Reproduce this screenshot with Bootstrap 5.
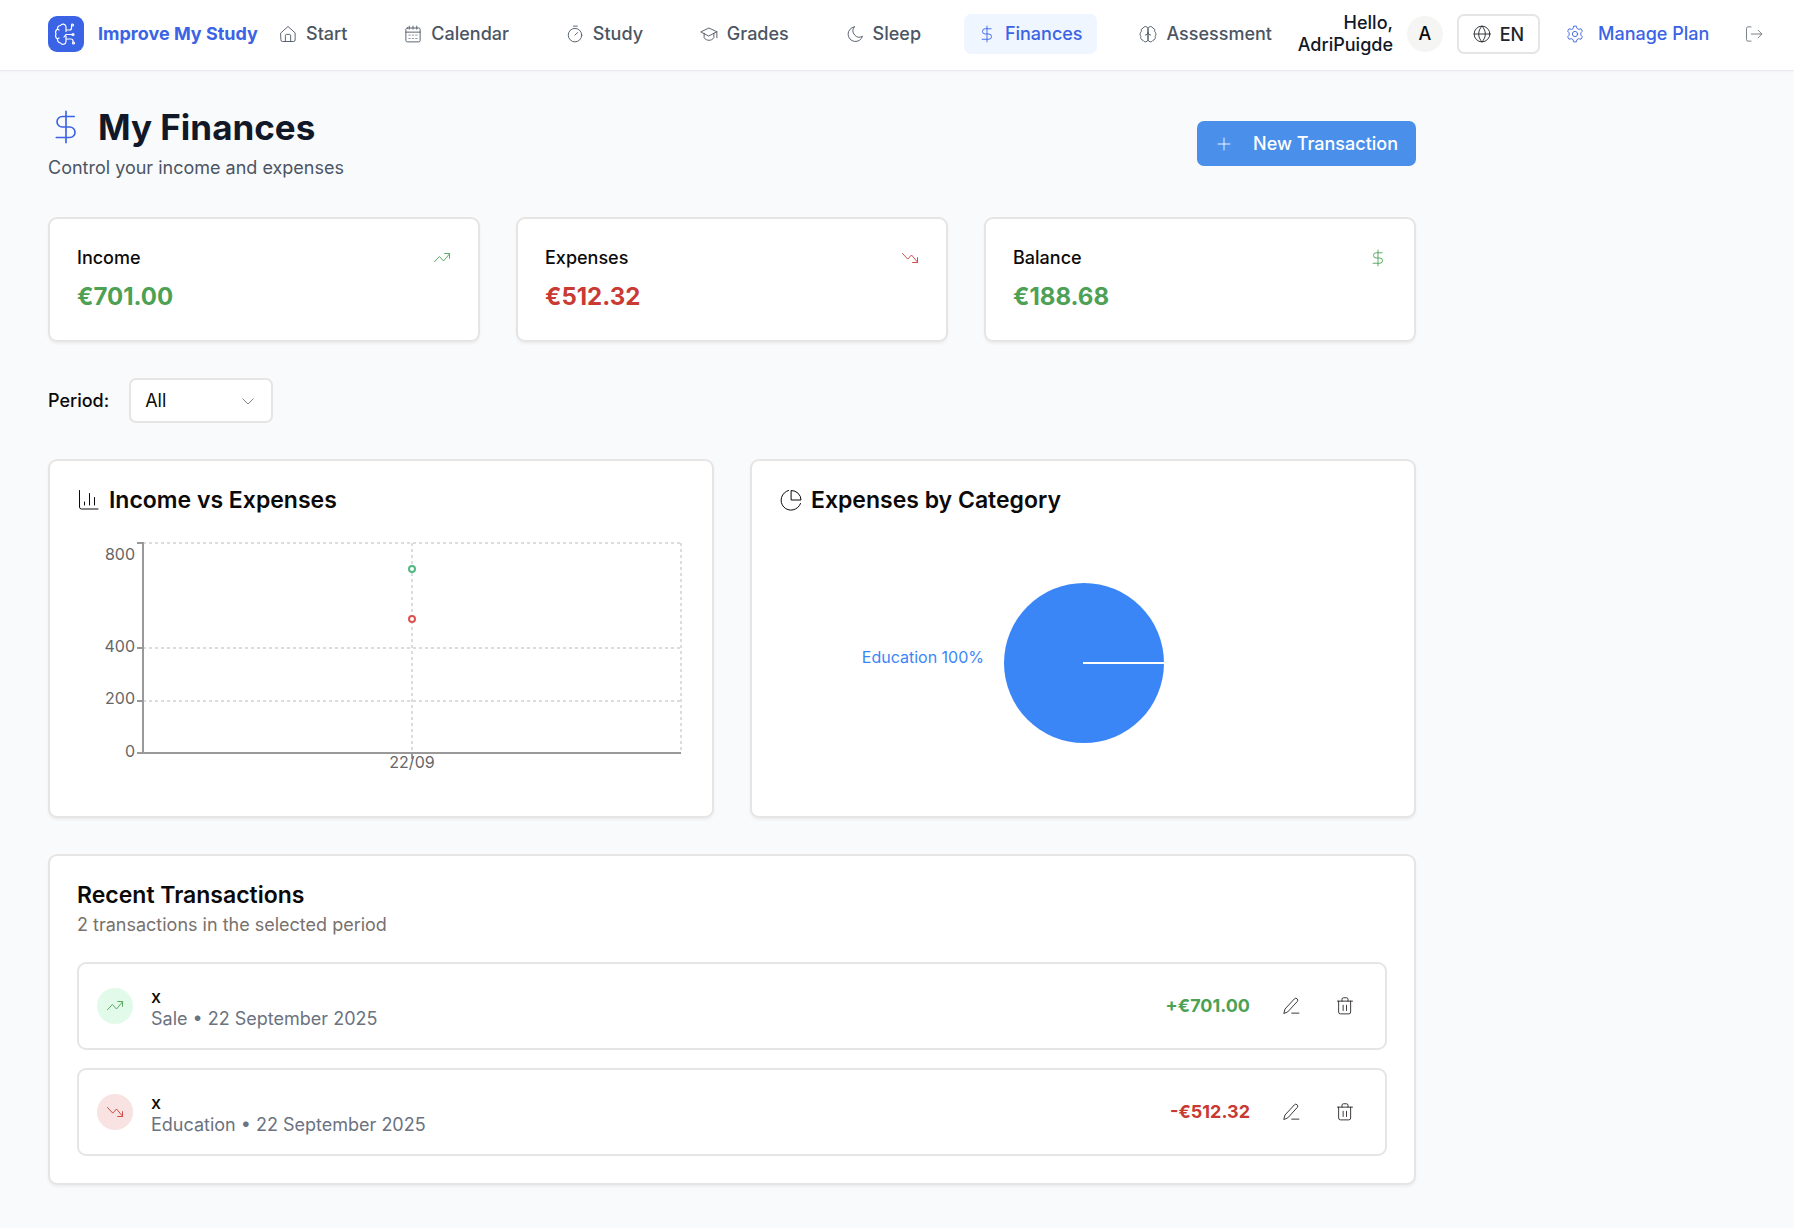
<!DOCTYPE html>
<html lang="en">
<head>
<meta charset="utf-8">
<meta name="viewport" content="width=device-width, initial-scale=1">
<title>My Finances - Improve My Study</title>
<link href="https://cdn.jsdelivr.net/npm/bootstrap@5.3.0/dist/css/bootstrap.min.css" rel="stylesheet">
<style>
:root { --brand:#3b63e5; --line:#e7e5e4; --gain:#4da155; --loss:#c93a32; --ink:#0c0a09; }
body { font-family:Inter,"Liberation Sans",sans-serif; font-size:18px; line-height:24px; color:var(--ink); background:#f9fafc; }
svg.ico { width:18px; height:18px; flex:none; fill:none; stroke:currentColor; stroke-width:1.2; stroke-linecap:round; stroke-linejoin:round; }
.topbar { height:71px; padding:0 18px 2px 48px; background:#fff; border-bottom:1px solid #e9ebee; box-shadow:0 1px 2px rgba(0,0,0,.03); }
.brand { gap:14px; width:217px; color:var(--brand); font-weight:700; white-space:nowrap; }
.brand-mark { width:36px; height:36px; border-radius:9px; background:var(--brand); color:#fff; }
.brand-mark svg.ico { width:24px; height:24px; }
.main-nav { width:1021px; }
.main-nav .nav-link { display:flex; align-items:center; gap:9px; height:40px; padding:0 14px; border-radius:7px; color:#4b5563; font-weight:500; }
.main-nav .nav-link.active { background:#eff6ff; color:var(--brand); }
.greeting { width:107px; line-height:22px; font-weight:500; color:#111827; text-align:right; }
.account { gap:14px; padding-left:14px; }
.avatar { width:36px; height:36px; background:#f5f5f4; font-weight:500; }
.lang { height:40px; width:83px; padding:0; border:2px solid var(--line); border-radius:7px; background:#fff; font-size:18px; font-weight:500; gap:9px; }
.plan { gap:14px; margin-left:12px; color:var(--brand); font-weight:500; }
.bare { width:45px; height:40px; padding:0; border:0; color:#292524; }
.page { max-width:1464px; padding:35px 48px; gap:36px; }
.page h1 { margin:0 0 6px; font-size:35px; line-height:42px; font-weight:700; color:#111827; gap:14px; }
.page h1 svg.ico { width:36px; height:36px; color:var(--brand); stroke-width:1.1; }
.subtitle { line-height:27px; color:#4b5563; }
.btn-new { height:45px; padding:0 18px; border:0; border-radius:7px; background:#4a90eb; color:#fff; font-size:18px; font-weight:500; gap:20px; }
.panel { padding:27px; border:2px solid var(--line); border-radius:9px; background:#fff; box-shadow:0 2px 3px rgba(0,0,0,.05); }
.tiles { --bs-gutter-x:36px; --bs-gutter-y:36px; }
.panel h2 { margin:0; font-size:18px; line-height:24px; font-weight:500; }
.amount { margin-top:11px; font-size:24px; line-height:32px; font-weight:700; }
.panel h3 { margin:0; font-size:23px; line-height:24px; font-weight:600; gap:8px; }
.panel h3 svg.ico { width:24px; height:24px; stroke-width:1; }
.gain { color:var(--gain); }
.loss { color:var(--loss); }
.period { gap:20px; font-weight:500; }
.period .form-select { width:144px; height:45px; padding:0 14px; border:2px solid var(--line); border-radius:7px; font-size:18px; color:var(--ink);
  background:#fff url("data:image/svg+xml,%3Csvg xmlns='http://www.w3.org/2000/svg' viewBox='0 0 24 24' fill='none' stroke='%23808080' stroke-width='1.3' stroke-linecap='round' stroke-linejoin='round'%3E%3Cpath d='m5 9 7 7 7-7'/%3E%3C/svg%3E") no-repeat right 14px center/18px 18px; }
.plot { display:block; width:100%; height:255px; margin-top:22px; font-size:16px; overflow:visible; }
.plot text { fill:#666; }
.grid-line { stroke:#dcdcdc; stroke-width:2; stroke-dasharray:3 3; }
.axis-line { stroke:#999; stroke-width:2; }
.hint { margin:4px 0 24px; line-height:27px; color:#78716c; }
.entry { padding:18px; border:2px solid #e5e5e5; border-radius:9px; }
.entry + .entry { margin-top:18px; }
.entry-text { line-height:22px; padding-top:4px; }
.dot { width:36px; height:36px; margin-right:18px; }
.dot-in { background:#e2fae9; }
.dot-out { background:#f8e2e2; }
.meta { color:#6b7280; }
.sum { font-weight:700; margin-right:18px; }
.entry .bare + .bare { margin-left:9px; }
</style>
</head>
<body>
<svg class="d-none" aria-hidden="true">
  <symbol id="i-dollar" viewBox="0 0 24 24"><path d="M12 1.500v21M17.500 5H9.500a3.500 3.500 0 0 0 0 7h5a3.500 3.500 0 0 1 0 7H5.500"/></symbol>
  <symbol id="i-up" viewBox="0 0 24 24"><path d="m2 17 6.500-7 5.500 6L22 6.500M15.500 6H22v6.500"/></symbol>
  <symbol id="i-down" viewBox="0 0 24 24"><path d="m2 6 7 7.500 5-5.500 8 9.500M15.500 18H22v-6.500"/></symbol>
  <symbol id="i-pen" viewBox="0 0 24 24"><path d="M2.500 21.500 4 16 16.500 2.500a2.400 2.400 0 0 1 3.800 3.500L8 19.500zM13 21.500h9.500"/></symbol>
  <symbol id="i-bin" viewBox="0 0 24 24"><path d="M2 5.500h20M3.500 5.500V20a2.500 2.500 0 0 0 2.500 2.500h11a2.500 2.500 0 0 0 2.500-2.500V5.500M8 5.500V3a2 2 0 0 1 2-2h4a2 2 0 0 1 2 2v2.500M9.500 11v7M14 11v7"/></symbol>
</svg>

<header class="topbar d-flex align-items-center">
  <a href="#" class="brand d-flex align-items-center text-decoration-none">
    <span class="brand-mark d-flex align-items-center justify-content-center"><svg class="ico" viewBox="0 0 24 24"><path d="M12 4.500a3 3 0 0 0-5.500-1A3 3 0 0 0 3.500 7 4 4 0 0 0 2 12a4 4 0 0 0 1.500 5 3.500 3.500 0 0 0 3 4 3 3 0 0 0 5.500-1.500V14M12 4.500V9.500M3.500 7 5 8M3.500 17 5 16M12 12.500l-2 2.500M12 8h3.500a2 2 0 0 0 2-2V4M12 12.500h6M12 17h5a2 2 0 0 1 2 2v1"/><circle cx="18.500" cy="3" r="1"/><circle cx="19" cy="12.500" r="1"/><circle cx="19.500" cy="21" r="1"/></svg></span>
    Improve My Study
  </a>
  <nav class="main-nav d-flex justify-content-between align-items-center">
    <a class="nav-link" href="#"><svg class="ico" viewBox="0 0 24 24"><path d="M2.500 10.500 12 2l9.500 8.500V20a2 2 0 0 1-2 2h-15a2 2 0 0 1-2-2zM8.500 22v-8a1.500 1.500 0 0 1 1.500-1.500h4a1.500 1.500 0 0 1 1.500 1.500v8"/></svg>Start</a>
    <a class="nav-link" href="#"><svg class="ico" viewBox="0 0 24 24"><rect x="2.500" y="4" width="19" height="18.500" rx="2"/><path d="M2.500 9.500h19M7 1.500v4M12 1.500v4M17 1.500v4"/><path stroke-width=".8" d="M6.500 13.500h2M11 13.500h2M15.500 13.500h2M6.500 18h2M11 18h2M15.500 18h2"/></svg>Calendar</a>
    <a class="nav-link" href="#"><svg class="ico" viewBox="0 0 24 24"><circle cx="12" cy="13.500" r="9"/><path d="M10 1.500h5M12 13.500l3.500-3.500"/></svg>Study</a>
    <a class="nav-link" href="#"><svg class="ico" viewBox="0 0 24 24"><path d="M1.500 9 12 4l10.500 5L12 14.500zM5.500 11v6c3 4.500 10 4.500 13 0v-6M22.500 9v8"/></svg>Grades</a>
    <a class="nav-link" href="#"><svg class="ico" viewBox="0 0 24 24"><path d="M11 2.500a9.800 9.800 0 1 0 11 12.500A8.500 8.500 0 0 1 11 2.500z"/></svg>Sleep</a>
    <a class="nav-link active" href="#" aria-current="page"><svg class="ico"><use href="#i-dollar"/></svg>Finances</a>
    <a class="nav-link" href="#"><svg class="ico" viewBox="0 0 24 24"><path d="M12 4.500a3.500 3.500 0 0 0-6.500-.5A4 4 0 0 0 3 9a4 4 0 0 0-.500 6 4 4 0 0 0 3 5.500 3.500 3.500 0 0 0 6.500-.5zM12 4.500a3.500 3.500 0 0 1 6.500-.5A4 4 0 0 1 21 9a4 4 0 0 1 .5 6 4 4 0 0 1-3 5.500 3.500 3.500 0 0 1-6.500-.5zM8.500 13.500A4 4 0 0 0 12 10a4 4 0 0 0 3.500 3.500"/></svg>Assessment</a>
  </nav>
  <div class="greeting">Hello, AdriPuigde</div>
  <div class="account d-flex align-items-center flex-grow-1">
    <span class="avatar rounded-circle d-flex align-items-center justify-content-center">A</span>
    <button type="button" class="btn lang d-flex align-items-center justify-content-center"><svg class="ico" viewBox="0 0 24 24"><circle cx="12" cy="12" r="10.500"/><path d="M1.500 12h21M12 1.500c-6 6-6 15 0 21M12 1.500c6 6 6 15 0 21"/></svg>EN</button>
    <a href="#" class="plan d-flex align-items-center text-decoration-none"><svg class="ico" viewBox="0 0 24 24"><circle cx="12" cy="12" r="3.500"/><path d="m9.400 4.500.8-3h3.600l.8 3 2.400 1.300 3-.8 1.800 3.200-2 2.200v3.200l2 2.200-1.800 3.200-3-.8-2.400 1.300-.8 3h-3.600l-.8-3L7 18.200l-3 .8-1.800-3.200 2-2.200v-3.200l-2-2.200L4 5l3 .8z"/></svg>Manage Plan</a>
    <button type="button" class="btn bare ms-auto text-secondary d-flex align-items-center justify-content-center" aria-label="Log out"><svg class="ico" viewBox="0 0 24 24"><path d="M8 2.500H4a2 2 0 0 0-2 2v15a2 2 0 0 0 2 2h4M8.500 12h14M17.500 7l5 5-5 5"/></svg></button>
  </div>
</header>

<main class="page d-flex flex-column">
  <div class="d-flex align-items-center justify-content-between">
    <div>
      <h1 class="d-flex align-items-center"><svg class="ico"><use href="#i-dollar"/></svg>My Finances</h1>
      <div class="subtitle">Control your income and expenses</div>
    </div>
    <button type="button" class="btn btn-new d-flex align-items-center"><svg class="ico" viewBox="0 0 24 24"><path d="M12 4v16M4 12h16"/></svg>New Transaction</button>
  </div>

  <div class="row tiles">
    <div class="col-4"><section class="panel">
      <div class="d-flex justify-content-between align-items-center"><h2>Income</h2><svg class="ico gain"><use href="#i-up"/></svg></div>
      <div class="amount gain">€701.00</div>
    </section></div>
    <div class="col-4"><section class="panel">
      <div class="d-flex justify-content-between align-items-center"><h2>Expenses</h2><svg class="ico loss"><use href="#i-down"/></svg></div>
      <div class="amount loss">€512.32</div>
    </section></div>
    <div class="col-4"><section class="panel">
      <div class="d-flex justify-content-between align-items-center"><h2>Balance</h2><svg class="ico gain"><use href="#i-dollar"/></svg></div>
      <div class="amount gain">€188.68</div>
    </section></div>
  </div>

  <div class="period d-flex align-items-center">
    <label for="period">Period:</label>
    <select id="period" class="form-select"><option>All</option><option>Month</option><option>Year</option></select>
  </div>

  <div class="row tiles">
    <div class="col-6"><section class="panel">
      <h3 class="d-flex align-items-center"><svg class="ico" viewBox="0 0 24 24"><path d="M2.500 2.500V19a2 2 0 0 0 2 2H21M7.500 14v3M12.500 5.500V17M17.500 9.500V17"/></svg>Income vs Expenses</h3>
      <svg class="plot" viewBox="0 0 608 255" role="img" aria-label="Income vs Expenses">
        <path class="grid-line" fill="none" d="M66 9H604M66 114H604M66 167H604M66 219H604M335 9V219M604 9V219M66 9V219"/>
        <path class="axis-line" fill="none" d="M66 8V219M60 219H604M60 9H66M60 114H66M60 167H66M335 219V225"/>
        <circle cx="335" cy="35" r="3" fill="#fff" stroke="#54b883" stroke-width="2"/>
        <circle cx="335" cy="85" r="3" fill="#fff" stroke="#e0524f" stroke-width="2"/>
        <g text-anchor="end"><text x="58" y="26">800</text><text x="58" y="118">400</text><text x="58" y="170">200</text><text x="58" y="223">0</text></g>
        <text x="335" y="234" text-anchor="middle">22/09</text>
      </svg>
    </section></div>
    <div class="col-6"><section class="panel">
      <h3 class="d-flex align-items-center"><svg class="ico" viewBox="0 0 24 24"><path d="M12.500 2.500a9.500 9.500 0 0 1 9.500 9.500h-9.500zM9.500 2.500A10 10 0 1 0 21.500 15.500"/></svg>Expenses by Category</h3>
      <svg class="plot" viewBox="0 0 608 255" role="img" aria-label="Expenses by Category">
        <circle cx="305" cy="129" r="80" fill="#3b86f7"/>
        <path d="M304 129H386" stroke="#fff" stroke-width="2"/>
        <text x="205" y="129" text-anchor="end" style="fill:#3b86f7">Education 100%</text>
      </svg>
    </section></div>
  </div>

  <section class="panel">
    <h3>Recent Transactions</h3>
    <div class="hint">2 transactions in the selected period</div>
    <div class="entry d-flex align-items-center">
      <span class="dot dot-in gain rounded-circle d-flex align-items-center justify-content-center"><svg class="ico"><use href="#i-up"/></svg></span>
      <div class="entry-text flex-grow-1"><div class="fw-medium">x</div><div class="meta">Sale • 22 September 2025</div></div>
      <span class="sum gain">+€701.00</span>
      <button type="button" class="btn bare d-flex align-items-center justify-content-center" aria-label="Edit"><svg class="ico"><use href="#i-pen"/></svg></button>
      <button type="button" class="btn bare d-flex align-items-center justify-content-center" aria-label="Delete"><svg class="ico"><use href="#i-bin"/></svg></button>
    </div>
    <div class="entry d-flex align-items-center">
      <span class="dot dot-out loss rounded-circle d-flex align-items-center justify-content-center"><svg class="ico"><use href="#i-down"/></svg></span>
      <div class="entry-text flex-grow-1"><div class="fw-medium">x</div><div class="meta">Education • 22 September 2025</div></div>
      <span class="sum loss">-€512.32</span>
      <button type="button" class="btn bare d-flex align-items-center justify-content-center" aria-label="Edit"><svg class="ico"><use href="#i-pen"/></svg></button>
      <button type="button" class="btn bare d-flex align-items-center justify-content-center" aria-label="Delete"><svg class="ico"><use href="#i-bin"/></svg></button>
    </div>
  </section>
</main>
<script src="https://cdn.jsdelivr.net/npm/bootstrap@5.3.0/dist/js/bootstrap.bundle.min.js"></script>
</body>
</html>
